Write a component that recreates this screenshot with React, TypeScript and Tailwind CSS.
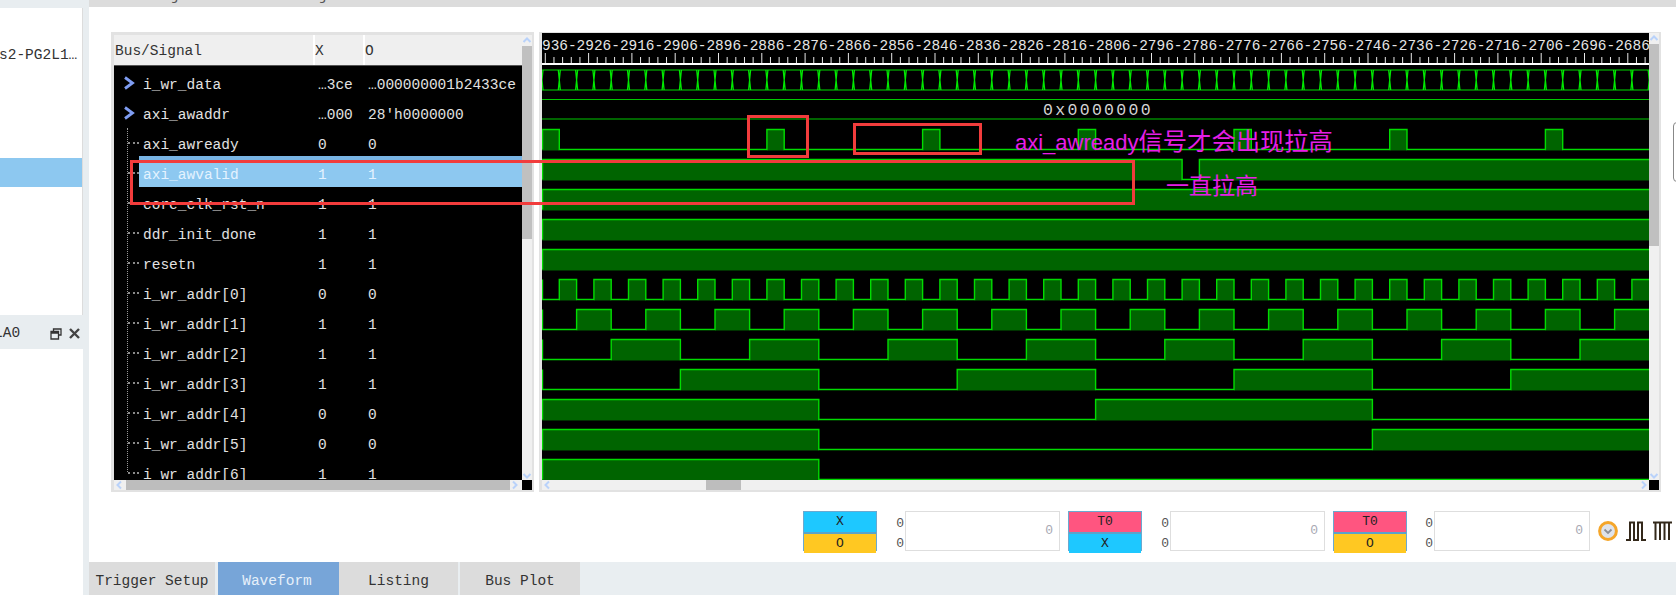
const mono = "font-['Liberation_Mono','Courier_New',monospace]";
const x = (k: number) => 17.3 * k;

const signals = [
  { name: "i_wr_data", a: "…3ce", b: "…000000001b2433ce", bus: true },
  { name: "axi_awaddr", a: "…000", b: "28'h0000000", bus: true },
  { name: "axi_awready", a: "0", b: "0" },
  { name: "axi_awvalid", a: "1", b: "1", selected: true },
  { name: "core_clk_rst_n", a: "1", b: "1" },
  { name: "ddr_init_done", a: "1", b: "1" },
  { name: "resetn", a: "1", b: "1" },
  { name: "i_wr_addr[0]", a: "0", b: "0" },
  { name: "i_wr_addr[1]", a: "1", b: "1" },
  { name: "i_wr_addr[2]", a: "1", b: "1" },
  { name: "i_wr_addr[3]", a: "1", b: "1" },
  { name: "i_wr_addr[4]", a: "0", b: "0" },
  { name: "i_wr_addr[5]", a: "0", b: "0" },
  { name: "i_wr_addr[6]", a: "1", b: "1" },
];

// high intervals per row, in half clock periods
const every = (start: number, len: number, step: number) => {
  const out: [number, number][] = [];
  for (let k = start; k < 64; k += step) out.push([k, Math.min(k + len, 64)]);
  return out;
};

const waves: { row: number; high: [number, number][] }[] = [
  { row: 2, high: [[0, 1], [13, 14], [22, 23], [31, 32], [40, 41], [49, 50], [58, 59]] },
  { row: 3, high: [[0, 37], [38, 64]] },
  { row: 4, high: [[0, 64]] },
  { row: 5, high: [[0, 64]] },
  { row: 6, high: [[0, 64]] },
  { row: 7, high: every(1, 1, 2) },
  { row: 8, high: every(2, 2, 4) },
  { row: 9, high: every(4, 4, 8) },
  { row: 10, high: every(8, 8, 16) },
  { row: 11, high: [[0, 16], [32, 48]] },
  { row: 12, high: [[0, 16], [48, 64]] },
  { row: 13, high: [[0, 16]] },
];

function wavePath(high: [number, number][], top: number, bottom: number) {
  let d = `M0.5 ${top} V${bottom}`;
  if (high[0][0] === 0) d = `M0.5 ${bottom} V${top}`;
  let level = high[0][0] === 0 ? 1 : 0;
  for (const [s, e] of high) {
    if (level === 0) d += ` H${x(s)} V${top}`;
    d += ` H${x(e)}`;
    level = 1;
    if (e < 64) {
      d += ` V${bottom}`;
      level = 0;
    }
  }
  if (level === 0) d += " H1107";
  return d;
}

function Waves() {
  const ruler = [];
  for (let v = 2926; v >= 2686; v -= 10) ruler.push(v);
  const labels = "936-" + ruler.join("-");
  const ticks = [];
  for (let i = 0; i < 128; i++) {
    const tx = 3.3 + i * 8.66;
    ticks.push(<line key={i} x1={tx} x2={tx} y1={i % 5 === 0 ? 20 : 24} y2={31} stroke="#e8e8e8" strokeWidth="1" />);
  }
  const busMarks = [];
  for (let k = 0; k <= 64; k++) {
    busMarks.push(
      <path
        key={k}
        d={`M${x(k) - 1} 37 L${x(k) + 1} 57 M${x(k) + 1} 37 L${x(k) - 1} 57`}
        stroke="#00e800"
        strokeWidth="1.3"
        fill="none"
      />,
    );
  }
  return (
    <svg width="1107" height="447" className="block bg-black">
      <text x="0" y="17" fill="#e6e6e6" fontSize="14.43" fontFamily="'Liberation Mono', monospace">
        {labels}
      </text>
      {ticks}
      <rect x="0" y="30" width="1107" height="2" fill="#fff" />
      <path d="M0 37 H1107 M0 57 H1107" stroke="#00d800" strokeWidth="1.2" />
      {busMarks}
      <path d="M0 66.5 H1107 M0 86 H1107" stroke="#00c800" strokeWidth="1.2" />
      <text x="556" y="82" textAnchor="middle" fill="#d4d4d4" fontSize="16.5" letterSpacing="2.3" fontFamily="'Liberation Mono', monospace">
        0x0000000
      </text>
      {waves.map(({ row, high }) => {
        const top = 30 * row + 36.5;
        const bottom = top + 20;
        return (
          <g key={row}>
            {high.map(([s, e]) => (
              <rect key={s} x={x(s)} y={top} width={x(e) - x(s)} height={21} fill="#006400" />
            ))}
            <path d={wavePath(high, top, bottom)} stroke="#00dc00" strokeWidth="1.4" fill="none" />
          </g>
        );
      })}
    </svg>
  );
}

function ScrollUp() {
  return (
    <svg width="10" height="11" viewBox="0 0 10 11" className="shrink-0">
      <path d="M1.5 7 L5 3.5 L8.5 7" stroke="#b9d2fa" strokeWidth="2" fill="none" />
    </svg>
  );
}

function ScrollDown() {
  return (
    <svg width="10" height="8" viewBox="0 0 10 8" className="shrink-0">
      <path d="M1.5 2 L5 5.5 L8.5 2" stroke="#b9d2fa" strokeWidth="2" fill="none" />
    </svg>
  );
}

function ScrollLeft() {
  return (
    <svg width="12" height="10" viewBox="0 0 12 10" className="shrink-0">
      <path d="M7 1.5 L3.5 5 L7 8.5" stroke="#b9d2fa" strokeWidth="2" fill="none" />
    </svg>
  );
}

function ScrollRight() {
  return (
    <svg width="10" height="10" viewBox="0 0 10 10" className="shrink-0">
      <path d="M3 1.5 L6.5 5 L3 8.5" stroke="#b9d2fa" strokeWidth="2" fill="none" />
    </svg>
  );
}

function SignalRow({ s }: { s: (typeof signals)[number] }) {
  return (
    <div className={`relative flex h-[30px] shrink-0 items-center pl-[29px] ${s.selected ? "text-[#e4f3ff]" : "text-[#e2e2e2]"}`}>
      {s.selected && (
        <div className="absolute left-[25px] right-0 top-[-5px] bottom-[4px] border-t-[4px] border-[#79b4e4] bg-[#8dc8f0]" />
      )}
      {s.bus ? (
        <svg width="12" height="14" viewBox="0 0 12 14" className="absolute left-[9px] top-[5px]">
          <path d="M2 1.5 L9.5 7 L2 12.5" stroke="#7f9df2" strokeWidth="2.8" fill="none" />
        </svg>
      ) : (
        <div className="absolute left-[14px] top-[11px] w-[11px] border-t-2 border-dotted border-[#8a8a8a]" />
      )}
      <span className="relative w-[175px] shrink-0">{s.name}</span>
      <span className="relative w-[50px] shrink-0">{s.a}</span>
      <span className="relative whitespace-nowrap">{s.b}</span>
    </div>
  );
}

function SignalPanel() {
  return (
    <div className={`flex h-[460px] w-[423px] shrink-0 border-t-[3px] border-b-2 border-l-[3px] border-r-2 border-[#e2e2e2] text-[14.5px] ${mono}`}>
      <div className="flex w-[408px] flex-col">
        <div className="flex h-[30px] shrink-0 gap-[2px] bg-white text-[#333]">
          <div className="flex w-[199px] items-center bg-[#efefef] pl-px pt-[3px]">Bus/Signal</div>
          <div className="flex w-[48px] items-center bg-[#efefef] pt-[3px]">X</div>
          <div className="flex flex-1 items-center bg-[#efefef] pt-[3px]">O</div>
        </div>
        <div className="h-px shrink-0 bg-[#555]" />
        <div className="relative flex h-[414px] flex-col overflow-hidden bg-black pt-[5px]">
          <div className="absolute left-[13px] top-[62px] h-[344px] border-l border-dotted border-[#999]" />
          {signals.map((s) => (
            <SignalRow key={s.name} s={s} />
          ))}
        </div>
        <div className="flex h-[10px] shrink-0 items-center bg-[#f0f0f0]">
          <ScrollLeft />
          <div className="h-full w-[384px] bg-[#bdbdbd]" />
          <ScrollRight />
        </div>
      </div>
      <div className="flex w-[10px] flex-col bg-[#f0f0f0]">
        <ScrollUp />
        <div className="h-[193px] bg-[#c0c0c0]" />
        <div className="flex-1" />
        <ScrollDown />
        <div className="h-[10px] bg-black" />
      </div>
    </div>
  );
}

function WavePanel() {
  return (
    <div className="flex h-[460px] w-[1122px] shrink-0 border-t border-b-2 border-l-[3px] border-r-2 border-[#e2e2e2]">
      <div className="flex w-[1107px] flex-col">
        <Waves />
        <div className="flex h-[10px] shrink-0 items-center bg-[#f0f0f0]">
          <ScrollLeft />
          <div className="ml-[152px] h-full w-[35px] bg-[#bdbdbd]" />
          <div className="flex-1" />
          <ScrollRight />
        </div>
      </div>
      <div className="flex w-[10px] flex-col bg-[#f0f0f0]">
        <ScrollUp />
        <div className="h-[202px] bg-[#c0c0c0]" />
        <div className="flex-1" />
        <ScrollDown />
        <div className="h-[10px] bg-black" />
      </div>
    </div>
  );
}

const swatch: Record<string, string> = {
  X: "bg-[#1ec8ff]",
  O: "bg-[#ffc822]",
  T0: "bg-[#ff5580]",
};

function Marker({ top, bottom, zerosWidth, inputWidth }: { top: string; bottom: string; zerosWidth: string; inputWidth: string }) {
  return (
    <div className={`flex h-10 text-[13px] ${mono}`}>
      <div className="flex w-[74px] flex-col border border-[#6aa9d0] text-[#222]">
        <div className={`flex flex-1 items-center justify-center border-b-2 border-[#5ba3c9] ${swatch[top]}`}>{top}</div>
        <div className={`flex flex-1 items-center justify-center ${swatch[bottom]}`}>{bottom}</div>
      </div>
      <div className={`flex flex-col items-end justify-between py-[3px] pr-px text-[#555] ${zerosWidth}`}>
        <span>0</span>
        <span>0</span>
      </div>
      <div className={`flex items-center justify-end border border-[#dedede] pr-[6px] text-[#a9a9b4] ${inputWidth}`}>0</div>
    </div>
  );
}

function Controls() {
  return (
    <div className="ml-[714px] mt-[19px] flex h-10 items-center gap-2">
      <Marker top="X" bottom="O" zerosWidth="w-[28px]" inputWidth="w-[155px]" />
      <Marker top="T0" bottom="X" zerosWidth="w-[28px]" inputWidth="w-[155px]" />
      <Marker top="T0" bottom="O" zerosWidth="w-[27px]" inputWidth="w-[156px]" />
      <svg width="20" height="20" viewBox="0 0 20 20" className="shrink-0">
        <circle cx="10" cy="10" r="8.4" fill="#dfe3ea" stroke="#f5a62a" strokeWidth="3" />
        <path d="M6.5 8.5 L10 12 L13.5 8.5" stroke="#8b8f98" strokeWidth="1.8" fill="none" />
      </svg>
      <svg width="20" height="20" viewBox="0 0 20 20" className="shrink-0">
        <path d="M0 19 H4 V1.5 H8 V19 H12 V1.5 H16 V19 H20" stroke="#33281a" strokeWidth="2" fill="none" />
      </svg>
      <svg width="19" height="20" viewBox="0 0 19 20" className="ml-[-1px] shrink-0">
        <path d="M0 1.5 H19 M2.5 1.5 V19 M7 1.5 V19 M11.5 1.5 V19 M16 1.5 V19" stroke="#33281a" strokeWidth="2" fill="none" />
      </svg>
    </div>
  );
}

function Tabs() {
  return (
    <div className={`flex h-[33px] bg-[#e9eef1] text-[14.5px] text-[#333] ${mono}`}>
      <div className="flex w-[126px] items-center justify-center bg-[#dcdcdc] pt-[6px]">Trigger Setup</div>
      <div className="ml-[3px] flex w-[121px] items-center justify-center bg-[#77a5d8] pr-[3px] pt-[6px] text-[#e6f0fa]">Waveform</div>
      <div className="flex w-[119px] items-center justify-center bg-[#dcdcdc] pt-[6px]">Listing</div>
      <div className="ml-[2px] flex w-[120px] items-center justify-center bg-[#dcdcdc] pt-[6px]">Bus Plot</div>
    </div>
  );
}

function Sidebar() {
  return (
    <div className={`flex w-[89px] shrink-0 flex-col bg-[#e8edf0] text-[14.5px] text-[#333] ${mono}`}>
      <div className="mt-[8px] h-[307px] w-[83px] overflow-hidden border-r border-[#dcdcdc] bg-white pt-[38px]">
        <div className="ml-[-1px] h-[18px] whitespace-nowrap leading-[18px]">s2-PG2L1…</div>
        <div className="mt-[94px] h-[29px] bg-[#8dc8f0]" />
      </div>
      <div className="mt-[3px] flex h-[29px] w-[83px] items-center pt-[2px]">
        <span className="ml-[-6px]">LA0</span>
        <svg width="12" height="12" viewBox="0 0 12 12" className="ml-[30px]">
          <path d="M3.5 3 V1 H11 V7 H8.5 M1 3.5 H8.5 V11 H1 Z M1 5 H8.5" stroke="#333" strokeWidth="1.3" fill="none" />
        </svg>
        <svg width="11" height="11" viewBox="0 0 11 11" className="ml-[7px]">
          <path d="M1 1 L10 10 M10 1 L1 10" stroke="#444" strokeWidth="2.4" fill="none" />
        </svg>
      </div>
      <div className="mt-[2px] w-[83px] flex-1 bg-white" />
    </div>
  );
}

export default function App() {
  return (
    <div className="relative flex h-[595px] w-[1676px] overflow-hidden bg-white">
      <Sidebar />
      <div className="flex min-w-0 flex-1 flex-col">
        <div className={`h-[7px] overflow-hidden bg-[#dcdcdc] pl-[4px] text-[14.5px] leading-[0px] text-[#555] ${mono}`}>
          <span className="relative top-[-4px] whitespace-nowrap">ILA:PG2 hjbus2ddr Status hjbus</span>
        </div>
        <div className="flex flex-1 flex-col">
          <div className="ml-[22px] mt-[25px] flex gap-[5px]">
            <SignalPanel />
            <WavePanel />
          </div>
          <Controls />
        </div>
        <Tabs />
      </div>

      {/* annotations drawn over the screenshot */}
      <div className="absolute left-[130px] top-[160px] h-[45px] w-[1005px] border-[3px] border-[#f23c3c]" />
      <div className="absolute left-[747px] top-[115px] h-[43px] w-[62px] border-[3px] border-[#f23c3c]" />
      <div className="absolute left-[853px] top-[123px] h-[32px] w-[129px] border-[3px] border-[#f23c3c]" />
      <div className="absolute left-[1015px] top-[127px] whitespace-nowrap font-['Liberation_Sans','Noto_Sans_CJK_SC',sans-serif] text-[22px] leading-[30px] text-[#e61ee6]">
        axi_awready<span className="text-[24.3px]">信号才会出现拉高</span>
      </div>
      <div className="absolute left-[1166px] top-[171px] whitespace-nowrap font-['Liberation_Sans','Noto_Sans_CJK_SC',sans-serif] text-[23px] leading-[30px] text-[#e61ee6]">
        一直拉高
      </div>
      <div className="absolute left-[1673px] top-[122px] h-[60px] w-[6px] rounded-l border border-[#888]" />
    </div>
  );
}
